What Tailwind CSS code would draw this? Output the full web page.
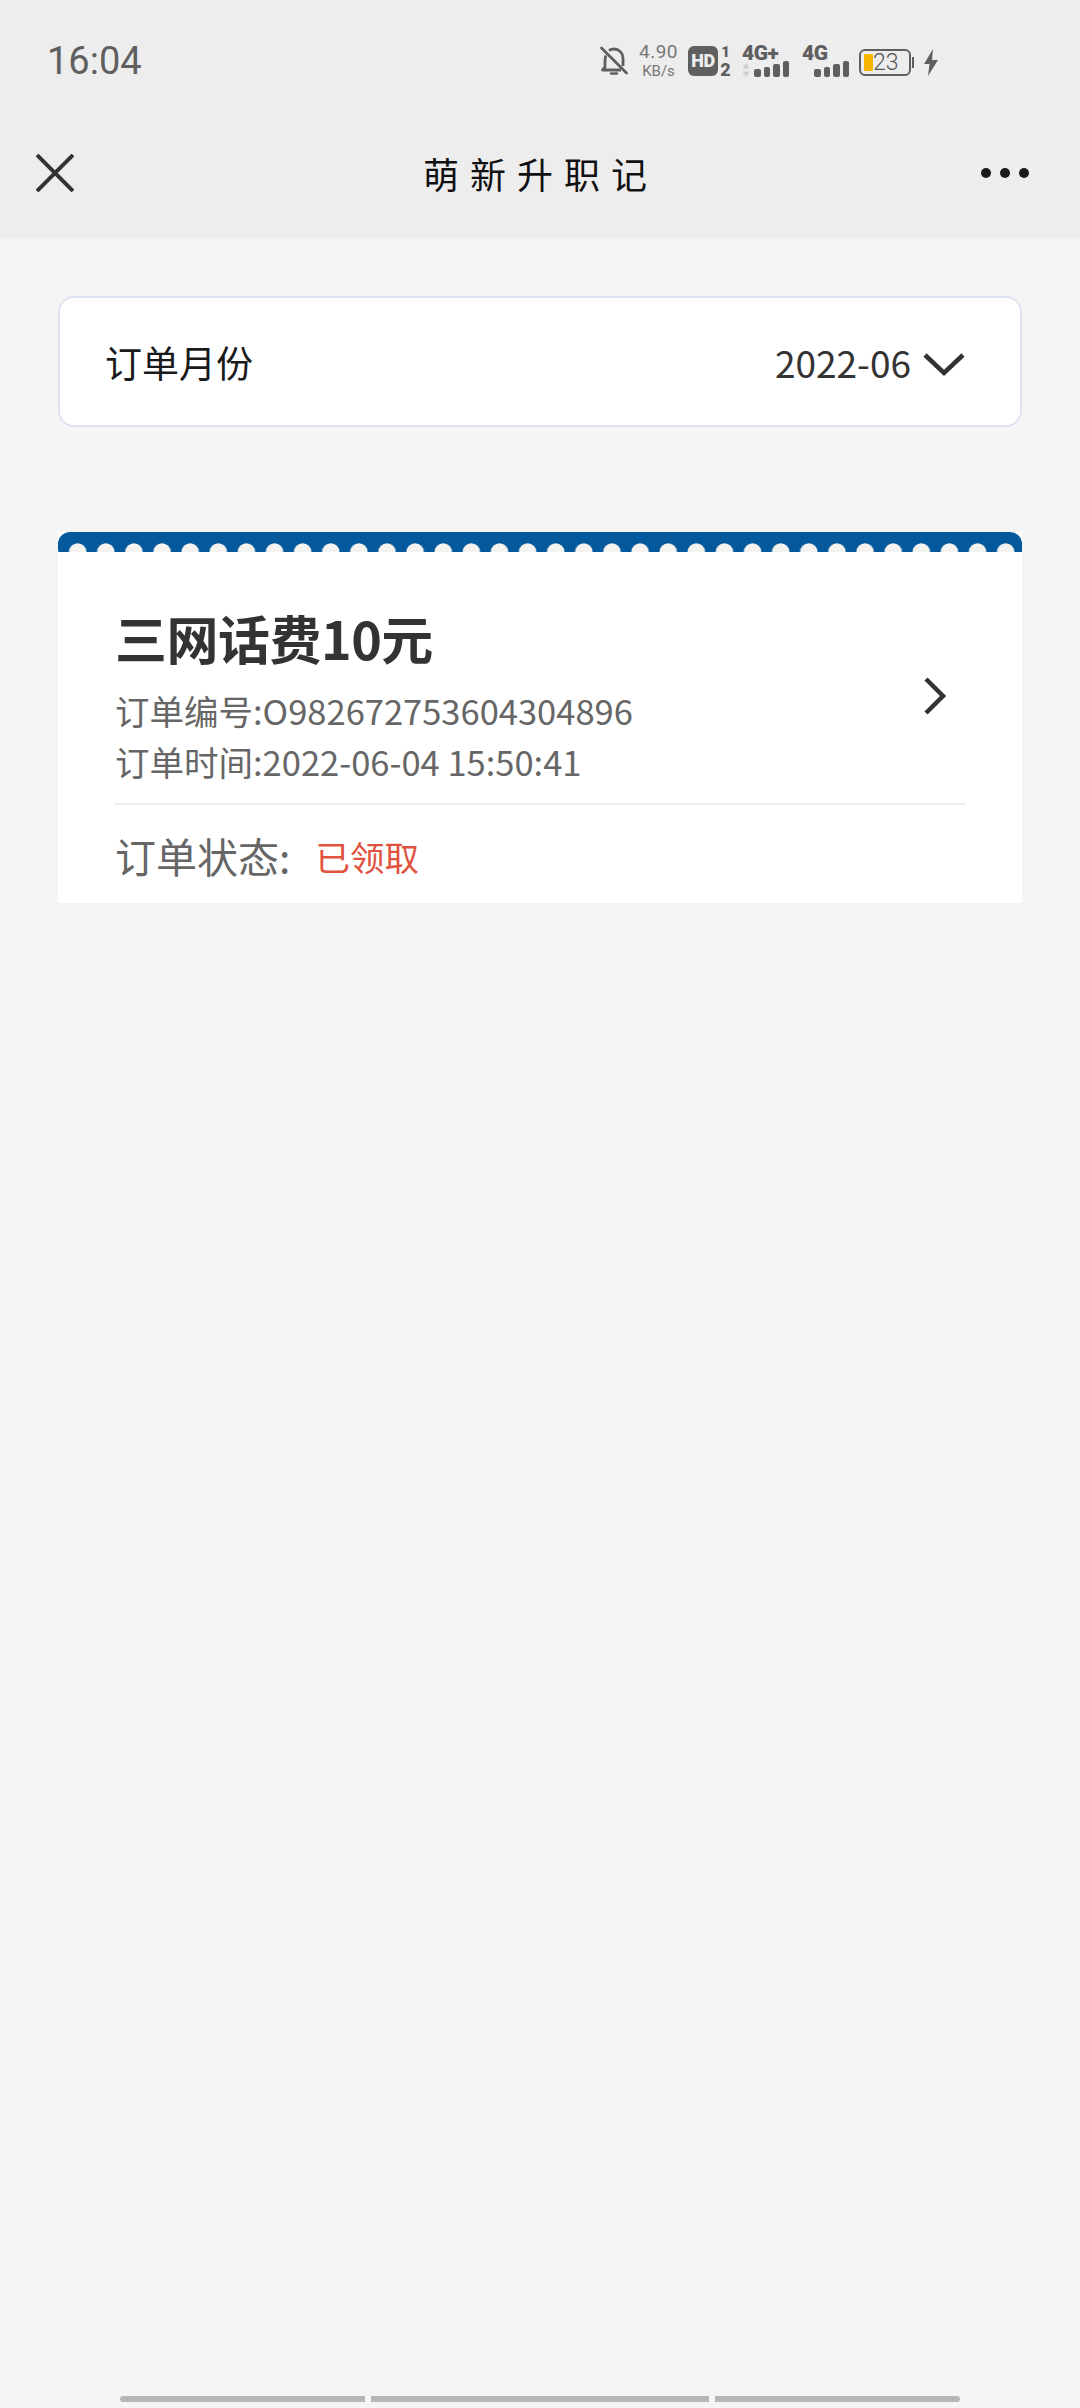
<!DOCTYPE html>
<html lang="zh-CN">
<head>
  <meta charset="UTF-8" />
  <meta name="viewport" content="width=device-width, initial-scale=1.0"/>
  <title>萌新升职记</title>
  <script src="https://cdn.jsdelivr.net/npm/@tailwindcss/browser@4"></script>
</head>
<body class="bg-[#f5f5f5] font-['Noto_Sans_CJK_SC','Noto_Sans',sans-serif]">
  <div class="w-[1080px] h-[2408px] flex flex-col overflow-hidden">

    <!-- status bar + title bar -->
    <header class="bg-[#ededed] h-[238px] shrink-0">
      <div class="h-[122px] flex items-start pl-[47px] pr-[142px]">
        <span class="mt-[38px] font-['Roboto',sans-serif] text-[38px] leading-[46px] text-[#5f5f5f]">16:04</span>

        <div class="ml-auto mt-[42px] flex items-start text-[#5f5f5f]">
          <svg class="mt-[4px]" width="28" height="30" viewBox="0 0 28 30" fill="none" stroke="#5f5f5f" stroke-width="2.8">
            <path d="M6 9.5C5 11 5 12.5 5 15v6l-2.5 3H21" stroke-linejoin="round"/>
            <path d="M9 4.5C10.5 3.5 12 3 14 3c5 0 9 4 9 9v8" />
            <path d="M1.5 2L26.5 27" stroke-linecap="round"/>
            <path d="M11 27.5h6" stroke-width="2.4" stroke-linecap="round"/>
          </svg>
          <div class="ml-[10px] w-[41px] flex flex-col items-center font-['Roboto',sans-serif] text-[#777]">
            <span class="text-[19px] leading-[19px] tracking-[0.5px]">4.90</span>
            <span class="mt-[2px] text-[15px] leading-[16px]">KB/s</span>
          </div>
          <div class="ml-[9px] mt-[4px] w-[30px] h-[30px] rounded-[6px] bg-[#5f5f5f] flex items-center justify-center font-['Roboto',sans-serif] font-black text-[18px] leading-none text-[#ededed] tracking-[-0.5px]">HD</div>
          <div class="ml-[2px] mt-[3px] w-[11px] flex flex-col items-center font-['Roboto',sans-serif] font-black text-[15px] leading-[15px]">
            <span>1</span>
            <span class="mt-[2px] text-[18px]">2</span>
          </div>
          <div class="ml-[11px] mt-[2px] w-[48px] flex flex-col">
            <span class="font-['Roboto',sans-serif] font-black text-[21px] leading-[18px] tracking-[-0.5px]">4G+</span>
            <div class="mt-[1px] flex items-end h-[14px]">
              <svg width="8" height="14" viewBox="0 0 8 14" fill="#cfcfcf"><path d="M4 0l3.6 5.5H.4zM4 14L.4 8.500h7.200z"/></svg>
              <div class="ml-[4px] flex items-end gap-[3px]">
                <i class="w-[6.500px] h-[8px] rounded-[2px] bg-[#5f5f5f]"></i>
                <i class="w-[6.500px] h-[10px] rounded-[2px] bg-[#5f5f5f]"></i>
                <i class="w-[6.500px] h-[13px] rounded-[2px] bg-[#5f5f5f]"></i>
                <i class="w-[6.500px] h-[16px] rounded-[2px] bg-[#5f5f5f]"></i>
              </div>
            </div>
          </div>
          <div class="ml-[12px] mt-[2px] w-[48px] flex flex-col">
            <span class="font-['Roboto',sans-serif] font-black text-[21px] leading-[18px] tracking-[-0.5px]">4G</span>
            <div class="mt-[1px] pl-[12px] flex items-end gap-[3px] h-[14px]">
              <i class="w-[6.500px] h-[8px] rounded-[2px] bg-[#5f5f5f]"></i>
              <i class="w-[6.500px] h-[10px] rounded-[2px] bg-[#5f5f5f]"></i>
              <i class="w-[6.500px] h-[13px] rounded-[2px] bg-[#5f5f5f]"></i>
              <i class="w-[6.500px] h-[16px] rounded-[2px] bg-[#5f5f5f]"></i>
            </div>
          </div>
          <div class="ml-[9px] mt-[7px] w-[52px] h-[27px] rounded-[6px] border-[2.500px] border-[#5f5f5f] flex items-center pl-[3px]">
            <i class="w-[9px] h-[17px] bg-[#f8b500] rounded-[1px] shrink-0"></i>
            <span class="font-['Roboto',sans-serif] font-light text-[23px] leading-none text-[#555]">23</span>
          </div>
          <i class="ml-[1px] mt-[15px] w-[2px] h-[11px] bg-[#5f5f5f]"></i>
          <svg class="ml-[10px] mt-[7px]" width="14" height="27" viewBox="0 0 14 27" fill="#5f5f5f"><path d="M9 0L0 15h5.500L4 27l10-16H8z"/></svg>
        </div>
      </div>

      <div class="h-[102px] flex items-center justify-between pl-[36px] pr-[51px]">
        <svg width="38" height="38" viewBox="0 0 38 38" fill="none" stroke="#333" stroke-width="4"><path d="M1 1l36 36M37 1L1 37"/></svg>
        <span class="ml-[26px] text-[36px] leading-[44px] tracking-[11px] text-[#111]">萌新升职记</span>
        <div class="flex gap-[9px]">
          <i class="w-[10px] h-[10px] rounded-full bg-[#1a1a1a]"></i>
          <i class="w-[10px] h-[10px] rounded-full bg-[#1a1a1a]"></i>
          <i class="w-[10px] h-[10px] rounded-full bg-[#1a1a1a]"></i>
        </div>
      </div>
    </header>

    <main class="flex-1 px-[58px] pt-[58px]">
      <!-- month picker -->
      <div class="h-[131px] bg-white rounded-[16px] border-2 border-[#dde3f0] flex items-center justify-between pl-[45px] pr-[55px]">
        <span class="text-[37px] leading-[50px] text-[#1a1a1a]">订单月份</span>
        <div class="flex items-center gap-[12px]">
          <span class="text-[37px] leading-[50px] text-[#333]">2022-06</span>
          <svg class="mt-[4px]" width="42" height="26" viewBox="0 0 42 26" fill="none" stroke="#333" stroke-width="4.500"><path d="M2 4l19 18L40 4"/></svg>
        </div>
      </div>

      <!-- order card -->
      <div class="mt-[105px] bg-white h-[371px]">
        <svg class="block rounded-t-[12px]" width="964" height="20" viewBox="0 0 964 20">
          <defs>
            <pattern id="scallop" x="5.64" y="0" width="28.12" height="20" patternUnits="userSpaceOnUse">
              <circle cx="14.06" cy="20" r="8.700" fill="#f5f3f0"/>
            </pattern>
          </defs>
          <rect width="964" height="20" fill="#04589c"/>
          <rect width="964" height="20" fill="url(#scallop)"/>
        </svg>

        <div class="px-[57px]">
          <div class="flex items-center justify-between pt-[56px] pb-[16px] border-b-2 border-[#eeeeee]">
            <div>
              <h2 class="text-[52px] leading-[60px] font-bold text-[#333] tracking-[-0.5px]">三网话费10元</h2>
              <p class="mt-[17px] text-[34.500px] leading-[51px] text-[#666]">订单编号:O982672753604304896</p>
              <p class="text-[34.500px] leading-[51px] text-[#666]">订单时间:2022-06-04 15:50:41</p>
            </div>
            <svg class="mr-[18px] mt-[-4px]" width="24" height="38" viewBox="0 0 24 38" fill="none" stroke="#333" stroke-width="4.500"><path d="M3 2l17 17L3 36"/></svg>
          </div>
          <div class="flex items-center mt-[21px]">
            <span class="text-[41px] leading-[56px] text-[#666]">订单状态:</span>
            <span class="ml-[25px] mt-[2px] text-[34.500px] leading-[56px] text-[#e0533f]">已领取</span>
          </div>
        </div>
      </div>
    </main>

    <!-- bottom tab indicator -->
    <div class="h-[9px] mb-[3px] shrink-0 flex gap-[6px] pl-[120px]">
      <i class="w-[245px] h-[6px] bg-[#b7b7b7] rounded-l-full"></i>
      <i class="w-[338px] h-[6px] bg-[#b7b7b7]"></i>
      <i class="w-[245px] h-[6px] bg-[#b7b7b7] rounded-r-full"></i>
    </div>
  </div>
</body>
</html>
